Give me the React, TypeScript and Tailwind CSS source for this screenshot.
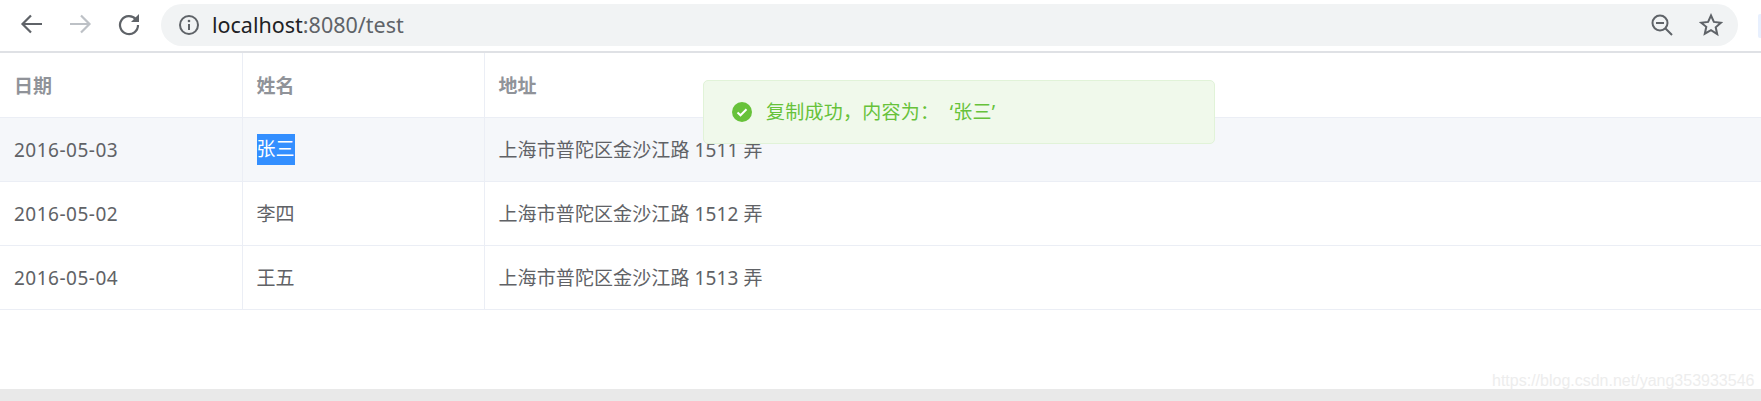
const font = "font-['Noto_Sans','Noto_Sans_CJK_SC',sans-serif]";

const rows = [
  { date: "2016-05-03", name: "张三", address: "上海市普陀区金沙江路 1511 弄" },
  { date: "2016-05-02", name: "李四", address: "上海市普陀区金沙江路 1512 弄" },
  { date: "2016-05-04", name: "王五", address: "上海市普陀区金沙江路 1513 弄" },
];

const Toolbar = () => (
  <div className="flex h-[53px] items-start border-b-2 border-[#dfe1e5] bg-white">
    <div className="flex h-[48px] w-[161px] shrink-0 items-center pl-[20px]">
      {/* back */}
      <svg width="26" height="26" viewBox="0 0 26 26" fill="none" stroke="#5f6368" strokeWidth="2.2" className="mr-[22px] -ml-[1px]">
        <path d="M23 13H4M12 4.500L3.500 13l8.500 8.500" />
      </svg>
      {/* forward */}
      <svg width="26" height="26" viewBox="0 0 26 26" fill="none" stroke="#bdc1c6" strokeWidth="2.2" className="mr-[24px]">
        <path d="M3 13h19M14 4.500l8.500 8.500-8.500 8.500" />
      </svg>
      {/* reload */}
      <svg width="26" height="26" viewBox="0 0 26 26" fill="none" className="-ml-[1px]">
        <path d="M20 8.500A9 9 0 1 0 22 14" stroke="#5f6368" strokeWidth="2.2" />
        <path d="M23 3v8h-8z" fill="#5f6368" />
      </svg>
    </div>
    <div className="mt-[4px] flex h-[42px] w-[1577px] shrink-0 items-center rounded-full bg-[#f1f3f4] pl-[17px] pr-[15px]">
      <svg width="22" height="22" viewBox="0 0 22 22" fill="none" className="mr-[12px]">
        <circle cx="11" cy="11" r="9" stroke="#5f6368" strokeWidth="2" />
        <path d="M11 10v6" stroke="#5f6368" strokeWidth="2" />
        <circle cx="11" cy="7" r="1.3" fill="#5f6368" />
      </svg>
      <span className="text-[21.5px] leading-none text-[#5f6368]">
        <span className="text-[#202124]">localhost</span>:8080/test
      </span>
      <svg width="24" height="24" viewBox="0 0 24 24" fill="none" stroke="#5f6368" strokeWidth="2" className="ml-auto mr-[25px]">
        <circle cx="10" cy="10" r="7.500" />
        <path d="M6 10h8M15.500 15.500L22 22" />
      </svg>
      <svg width="24" height="24" viewBox="0 0 24 24" fill="none" stroke="#5f6368" strokeWidth="2">
        <path d="M12 2.500l2.900 6.400 7 .8-5.200 4.600 1.500 6.900L12 17.200l-6.200 3.500 1.500-6.900L2.100 9.700l7-.8z" />
      </svg>
    </div>
    <div className="mt-[14px] ml-auto h-[24px] w-[3px] rounded-l-[2px] bg-[#e8f0fe]" />
  </div>
);

export default function App() {
  return (
    <div className={`relative flex h-[401px] w-[1761px] flex-col overflow-hidden bg-white ${font}`}>
      <Toolbar />

      <table className="w-full table-fixed border-collapse text-[19px] text-[#606266]">
        <colgroup>
          <col className="w-[242px]" />
          <col className="w-[242px]" />
          <col />
        </colgroup>
        <thead>
          <tr className="h-[64px] border-b border-[#ebeef5] text-left text-[#909399]">
            <th className="border-r border-[#ebeef5] pt-[3px] pl-[14px] font-bold">日期</th>
            <th className="border-r border-[#ebeef5] pt-[3px] pl-[14px] font-bold">姓名</th>
            <th className="pt-[3px] pl-[14px] font-bold">地址</th>
          </tr>
        </thead>
        <tbody>
          {rows.map((r, i) => (
            <tr key={r.date} className={`h-[64px] border-b border-[#ebeef5] ${i === 0 ? "bg-[#f5f7fa]" : ""}`}>
              <td className="border-r border-[#ebeef5] pt-[2px] pl-[14px] tracking-[0.5px]">{r.date}</td>
              <td className="border-r border-[#ebeef5] pt-[2px] pl-[14px]">
                {i === 0 ? (
                  <span className="-mt-[2px] inline-block h-[31px] w-[38px] bg-[#338fff] leading-[31px] text-white">{r.name}</span>
                ) : (
                  r.name
                )}
              </td>
              <td className="pt-[2px] pl-[14px] tracking-[0.1px]">{r.address}</td>
            </tr>
          ))}
        </tbody>
      </table>

      <div className="mt-auto h-[12px] bg-[#e9e9e9]" />

      {/* toast */}
      <div className="absolute top-[80px] left-[703px] flex h-[64px] w-[512px] items-center rounded-[5px] border border-[#e1f3d8] bg-[#f0f9eb] pl-[28px]">
        <svg width="20" height="20" viewBox="0 0 20 20" className="mr-[14px]">
          <circle cx="10" cy="10" r="10" fill="#67c23a" />
          <path d="M5.500 10.500l3 2.800 6-6" fill="none" stroke="#fff" strokeWidth="2" />
        </svg>
        <span className="text-[19px] tracking-[0.25px] whitespace-pre text-[#67c23a]">复制成功，内容为：  ‘张三’</span>
      </div>

      <span className="absolute top-[372px] left-[1492px] font-['Liberation_Sans',sans-serif] text-[16px] leading-[18px] text-[#ededed]">
        https://blog.csdn.net/yang353933546
      </span>
    </div>
  );
}
